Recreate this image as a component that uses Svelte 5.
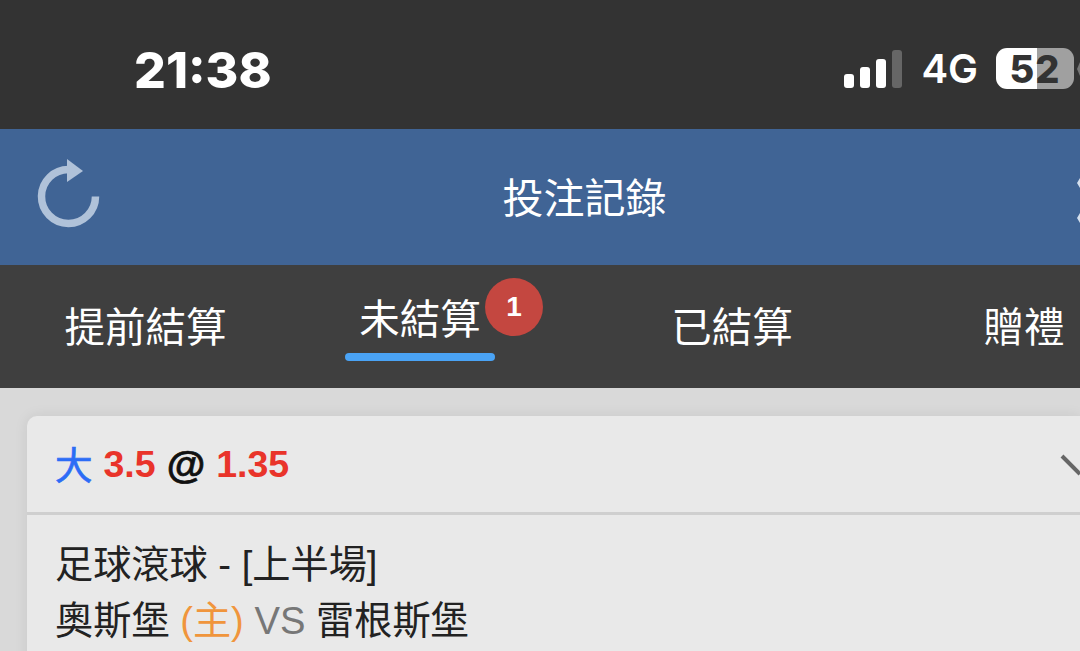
<script>
  const tabs = [
    { label: '提前結算' },
    { label: '未結算', active: true, badge: 1 },
    { label: '已結算' },
    { label: '贈禮' }
  ];
</script>

<div class="page">
  <div class="status">
    <span class="time">21:38</span>
    <div class="status-right">
      <div class="signal">
        <i class="b1"></i><i class="b2"></i><i class="b3"></i><i class="b4"></i>
      </div>
      <span class="net">4G</span>
      <div class="battery">
        <span class="level">52</span>
      </div>
      <span class="nub"></span>
    </div>
  </div>

  <header class="topbar">
    <svg class="refresh" width="70" height="76" viewBox="0 0 70 76">
      <path d="M33 14.5 A27 27 0 1 0 59.5 41.5" fill="none" stroke="#b0c2d9" stroke-width="7.5" />
      <path d="M31 4 L47 16 L31 27 Z" fill="#b0c2d9" />
    </svg>
    <h1>投注記錄</h1>
    <svg class="close" width="3" height="46" viewBox="0 0 3 46">
      <path d="M3 0 L0 5 L3 10 Z M3 35 L0 40 L3 45 Z" fill="#d5e0ee" />
    </svg>
  </header>

  <nav class="tabs">
    {#each tabs as tab}
      <div class="tab" class:active={tab.active}>
        <span>{tab.label}</span>
        {#if tab.badge}<b class="badge">{tab.badge}</b>{/if}
      </div>
    {/each}
  </nav>

  <main class="content">
    <section class="card">
      <div class="card-head">
        <div class="bet">
          <span class="big">大</span>
          <span class="odd">3.5</span>
          <span class="at">@</span>
          <span class="odd">1.35</span>
        </div>
        <svg class="chev" width="20" height="24" viewBox="0 0 20 24">
          <path d="M2 2 L20 20" fill="none" stroke="#666" stroke-width="4" />
        </svg>
      </div>
      <div class="card-body">
        <div>足球滾球 - [上半場]</div>
        <div>奧斯堡 <span class="home">(主)</span> <span class="vs">VS</span> 雷根斯堡</div>
      </div>
    </section>
  </main>
</div>

<style>
  :global(body) {
    margin: 0;
    overflow: hidden;
  }

  .page {
    width: 1080px;
    height: 651px;
    overflow: hidden;
    display: flex;
    flex-direction: column;
    background: #d9d9d9;
    font-family: "Liberation Sans", "Noto Sans CJK TC", sans-serif;
  }

  .status {
    height: 129px;
    flex: none;
    background: #333333;
    display: flex;
    justify-content: space-between;
    align-items: center;
    padding: 8px 0 0 134px;
    box-sizing: border-box;
    color: #fff;
  }

  .time {
    font-family: "Inter", "Liberation Sans", sans-serif;
    font-size: 50px;
    font-weight: 800;
    position: relative;
    top: 1px;
  }

  .status-right {
    display: flex;
    align-items: center;
  }

  .signal {
    display: flex;
    align-items: flex-end;
    gap: 6.3px;
    height: 38px;
  }

  .signal i {
    display: block;
    width: 10px;
    border-radius: 3px;
    background: #fff;
  }

  .b1 { height: 14px; }
  .b2 { height: 21px; }
  .b3 { height: 29px; }
  .signal .b4 { height: 38px; background: #666; }

  .net {
    font-family: "Inter", "Liberation Sans", sans-serif;
    font-size: 40px;
    font-weight: 600;
    margin-left: 19px;
  }

  .battery {
    margin-left: 18px;
    width: 78px;
    height: 41px;
    border-radius: 11px;
    background: linear-gradient(to right, #fff 52%, #a0a0a0 52%);
    color: #333;
    display: flex;
    align-items: center;
    justify-content: center;
  }

  .level {
    font-family: "Inter", "Liberation Sans", sans-serif;
    font-size: 38px;
    font-weight: 800;
    letter-spacing: 1px;
  }

  .nub {
    width: 0;
    height: 0;
    margin-left: 3px;
    border-top: 7px solid transparent;
    border-bottom: 7px solid transparent;
    border-right: 3px solid #777;
  }

  .topbar {
    height: 136px;
    flex: none;
    background: #406495;
    position: relative;
    display: flex;
    align-items: center;
    justify-content: center;
  }

  .topbar h1 {
    margin: 0 0 4px 89px;
    font-size: 41px;
    font-weight: 400;
    color: #fff;
  }

  .refresh {
    position: absolute;
    left: 36px;
    top: 26px;
  }

  .close {
    position: absolute;
    right: 0;
    top: 49px;
  }

  .tabs {
    height: 123px;
    flex: none;
    background: #3f3f3f;
    display: grid;
    grid-template-columns: 291px 150px 366px 110px;
    column-gap: 54px;
    color: #fff;
    font-size: 40.5px;
    box-sizing: border-box;
  }

  .tab {
    position: relative;
    display: flex;
    justify-content: center;
    align-items: center;
    padding-bottom: 4px;
  }

  .tab span {
    white-space: nowrap;
  }

  .tab.active {
    padding-bottom: 20px;
  }

  .tab.active::after {
    content: '';
    position: absolute;
    left: 0;
    right: 0;
    top: 88px;
    height: 8px;
    border-radius: 4px;
    background: #4aa3f5;
  }

  .badge {
    position: absolute;
    left: 140px;
    top: 13px;
    width: 58px;
    height: 58px;
    border-radius: 50%;
    background: #c44740;
    color: #fff;
    font-size: 28px;
    display: flex;
    align-items: center;
    justify-content: center;
  }

  .content {
    flex: 1;
    padding: 28px 0 0 27px;
    background: #d9d9d9;
  }

  .card {
    background: #e9e9e9;
    border-radius: 10px 0 0 0;
    box-shadow: 0 0 14px rgba(0, 0, 0, 0.08);
    height: 300px;
  }

  .card-head {
    height: 96px;
    display: flex;
    align-items: center;
    justify-content: space-between;
    padding-left: 28px;
    border-bottom: 3px solid #cfcfcf;
  }

  .bet {
    font-size: 37.5px;
    font-weight: 700;
    display: flex;
    gap: 11px;
    align-items: center;
  }

  .big {
    color: #2c6cf6;
    font-weight: 400;
    margin-top: -4px;
    -webkit-text-stroke: 0.7px #2c6cf6;
  }

  .odd { color: #e9342a; }

  .at {
    color: #111;
    font-size: 39.5px;
    -webkit-text-stroke: 0.7px #111;
  }

  .chev { margin-top: 4px; }

  .card-body {
    padding: 22px 0 0 28px;
    font-size: 38.2px;
    line-height: 56px;
    color: #222;
  }

  .home { color: #f0953c; }
  .vs { color: #777; }
</style>
